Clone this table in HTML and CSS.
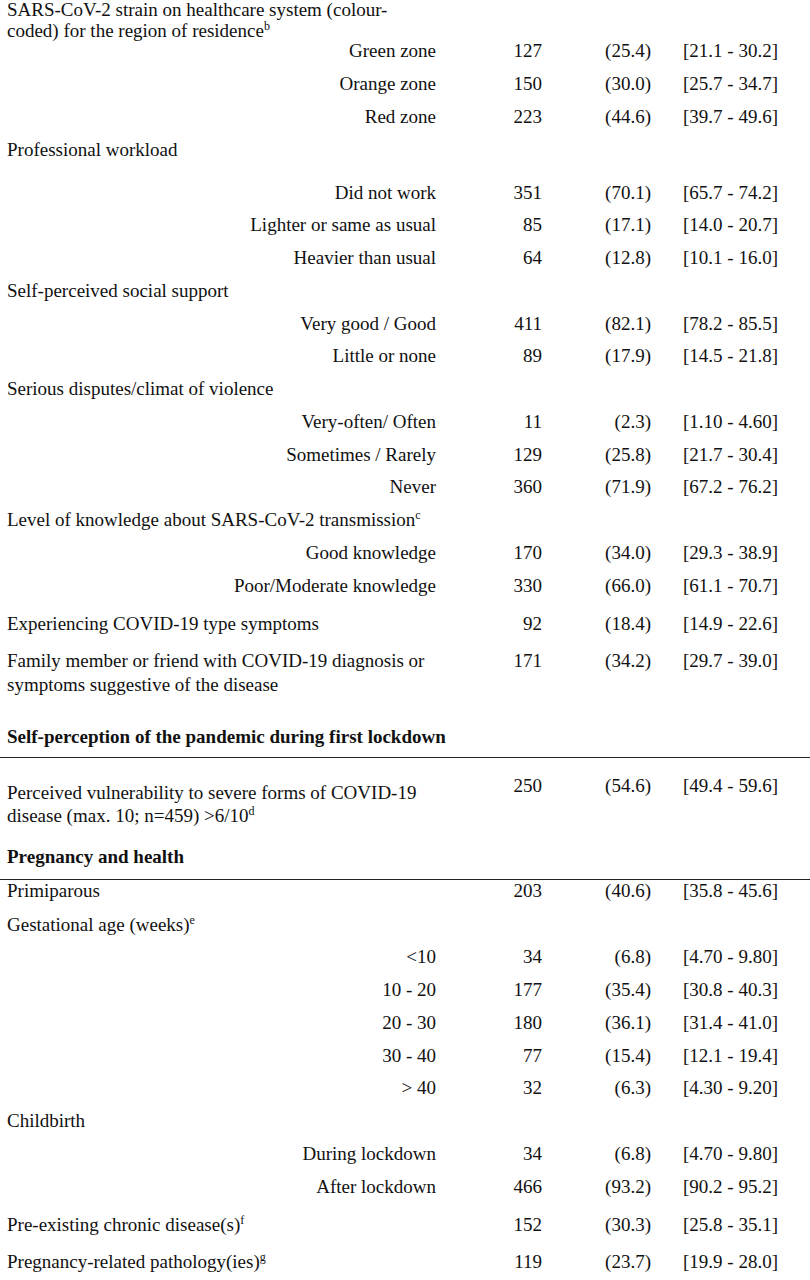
FILE: index.html
```html
<!DOCTYPE html>
<html>
<head>
<meta charset="utf-8">
<link rel="stylesheet" href="styles.css">
</head>
<body>
<div class="table">
  <div class="row h41"><div class="label">SARS-CoV-2 strain on healthcare system (colour-<br>coded) for the region of residence<sup>b</sup></div></div>
  <div class="row"><div class="sub">Green zone</div><div class="n">127</div><div class="pct">(25.4)</div><div class="ci">[21.1 - 30.2]</div></div>
  <div class="row"><div class="sub">Orange zone</div><div class="n">150</div><div class="pct">(30.0)</div><div class="ci">[25.7 - 34.7]</div></div>
  <div class="row h33"><div class="sub">Red zone</div><div class="n">223</div><div class="pct">(44.6)</div><div class="ci">[39.7 - 49.6]</div></div>
  <div class="row h43"><div class="label">Professional workload</div></div>
  <div class="row"><div class="sub">Did not work</div><div class="n">351</div><div class="pct">(70.1)</div><div class="ci">[65.7 - 74.2]</div></div>
  <div class="row"><div class="sub">Lighter or same as usual</div><div class="n">85</div><div class="pct">(17.1)</div><div class="ci">[14.0 - 20.7]</div></div>
  <div class="row"><div class="sub">Heavier than usual</div><div class="n">64</div><div class="pct">(12.8)</div><div class="ci">[10.1 - 16.0]</div></div>
  <div class="row"><div class="label">Self-perceived social support</div></div>
  <div class="row"><div class="sub">Very good / Good</div><div class="n">411</div><div class="pct">(82.1)</div><div class="ci">[78.2 - 85.5]</div></div>
  <div class="row"><div class="sub">Little or none</div><div class="n">89</div><div class="pct">(17.9)</div><div class="ci">[14.5 - 21.8]</div></div>
  <div class="row"><div class="label">Serious disputes/climat of violence</div></div>
  <div class="row"><div class="sub">Very-often/ Often</div><div class="n">11</div><div class="pct">(2.3)</div><div class="ci">[1.10 - 4.60]</div></div>
  <div class="row"><div class="sub">Sometimes / Rarely</div><div class="n">129</div><div class="pct">(25.8)</div><div class="ci">[21.7 - 30.4]</div></div>
  <div class="row"><div class="sub">Never</div><div class="n">360</div><div class="pct">(71.9)</div><div class="ci">[67.2 - 76.2]</div></div>
  <div class="row"><div class="label">Level of knowledge about SARS-CoV-2 transmission<sup>c</sup></div></div>
  <div class="row"><div class="sub">Good knowledge</div><div class="n">170</div><div class="pct">(34.0)</div><div class="ci">[29.3 - 38.9]</div></div>
  <div class="row h38"><div class="sub">Poor/Moderate knowledge</div><div class="n">330</div><div class="pct">(66.0)</div><div class="ci">[61.1 - 70.7]</div></div>
  <div class="row h37"><div class="label">Experiencing COVID-19 type symptoms</div><div class="n">92</div><div class="pct">(18.4)</div><div class="ci">[14.9 - 22.6]</div></div>
  <div class="row h76"><div class="label tall">Family member or friend with COVID-19 diagnosis or<br>symptoms suggestive of the disease</div><div class="n">171</div><div class="pct">(34.2)</div><div class="ci">[29.7 - 39.0]</div></div>
  <div class="section s31">Self-perception of the pandemic during first lockdown</div>
  <div class="row after-rule h71"><div class="label drop">Perceived vulnerability to severe forms of COVID-19<br>disease (max. 10; n=459) &gt;6/10<sup>d</sup></div><div class="n">250</div><div class="pct">(54.6)</div><div class="ci">[49.4 - 59.6]</div></div>
  <div class="section s33">Pregnancy and health</div>
  <div class="row h34"><div class="label">Primiparous</div><div class="n">203</div><div class="pct">(40.6)</div><div class="ci">[35.8 - 45.6]</div></div>
  <div class="row"><div class="label">Gestational age (weeks)<sup>e</sup></div></div>
  <div class="row"><div class="sub">&lt;10</div><div class="n">34</div><div class="pct">(6.8)</div><div class="ci">[4.70 - 9.80]</div></div>
  <div class="row"><div class="sub">10 - 20</div><div class="n">177</div><div class="pct">(35.4)</div><div class="ci">[30.8 - 40.3]</div></div>
  <div class="row"><div class="sub">20 - 30</div><div class="n">180</div><div class="pct">(36.1)</div><div class="ci">[31.4 - 41.0]</div></div>
  <div class="row"><div class="sub">30 - 40</div><div class="n">77</div><div class="pct">(15.4)</div><div class="ci">[12.1 - 19.4]</div></div>
  <div class="row"><div class="sub">&gt; 40</div><div class="n">32</div><div class="pct">(6.3)</div><div class="ci">[4.30 - 9.20]</div></div>
  <div class="row"><div class="label">Childbirth</div></div>
  <div class="row"><div class="sub">During lockdown</div><div class="n">34</div><div class="pct">(6.8)</div><div class="ci">[4.70 - 9.80]</div></div>
  <div class="row h38"><div class="sub">After lockdown</div><div class="n">466</div><div class="pct">(93.2)</div><div class="ci">[90.2 - 95.2]</div></div>
  <div class="row h37"><div class="label">Pre-existing chronic disease(s)<sup>f</sup></div><div class="n">152</div><div class="pct">(30.3)</div><div class="ci">[25.8 - 35.1]</div></div>
  <div class="row h37"><div class="label">Pregnancy-related pathology(ies)<sup>g</sup></div><div class="n">119</div><div class="pct">(23.7)</div><div class="ci">[19.9 - 28.0]</div></div>
</div>
</body>
</html>
```

FILE: styles.css
```css
html, body {
  margin: 0;
  padding: 0;
  background: #ffffff;
}

body {
  font-family: "Liberation Serif", "Times New Roman", serif;
  font-size: 19px;
  color: #111111;
  width: 810px;
  overflow: hidden;
}

.table {
  display: flex;
  flex-direction: column;
  margin-top: -1px;
}

.row {
  display: grid;
  grid-template-columns: 429px 106px 109px 1fr;
  padding-left: 7px;
  line-height: 21px;
  height: 32.75px;
  box-sizing: border-box;
  align-items: start;
}

.h33 { height: 33px; }
.h34 { height: 34px; }
.h37 { height: 37px; }
.h38 { height: 38px; }
.h41 { height: 41px; }
.h43 { height: 43px; }
.h71 { height: 71px; }
.h76 { height: 76px; }

.label {
  grid-column: 1;
  text-align: left;
  white-space: nowrap;
}

.tall {
  line-height: 24px;
  margin-top: -1px;
}

.drop {
  padding-top: 6px;
  line-height: 23px;
}

.sub {
  grid-column: 1;
  text-align: right;
  white-space: nowrap;
}

.n {
  grid-column: 2;
  text-align: right;
}

.pct {
  grid-column: 3;
  text-align: right;
}

.ci {
  grid-column: 4;
  padding-left: 32px;
  white-space: nowrap;
}

sup {
  font-size: 12px;
  line-height: 0;
  vertical-align: 7px;
}

.section {
  font-weight: bold;
  padding-left: 7px;
  line-height: 21px;
  box-sizing: border-box;
  border-bottom: 1px solid #222222;
}

.s31 { height: 32px; }
.s33 { height: 34px; }

.after-rule {
  margin-top: 17px;
}
```
